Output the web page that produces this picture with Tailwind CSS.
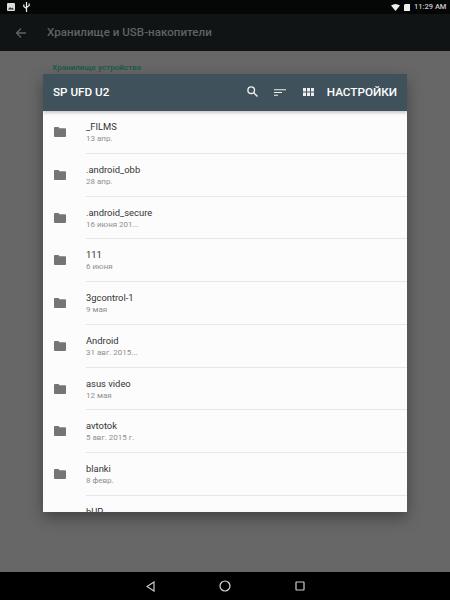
<!DOCTYPE html>
<html lang="en">
<head>
  <meta charset="UTF-8" />
  <title>SP UFD U2</title>
  <script src="https://cdn.jsdelivr.net/npm/@tailwindcss/browser@4"></script>
</head>
<body class="bg-[#676767]">
  <div class="relative flex flex-col w-[450px] h-[600px] overflow-hidden font-['Roboto',sans-serif]">
    <!-- status bar -->
    <div class="flex items-center h-[14px] pl-[7px] pr-[5px] bg-[#050606]">
      <svg class="w-[8px] h-[8px]" viewBox="0 0 8 8"><rect width="8" height="8" rx="1" fill="#ddd"/><path d="M1 6.500l2-2.500 1.500 1.500 1-1 1.500 2z" fill="#333"/></svg>
      <svg class="w-[7px] h-[10px] ml-[8px]" viewBox="0 0 7 10" fill="none" stroke="#eee" stroke-width="1.200"><path d="M3.500 0v10M.8 2.500v2l2.700 2M6.200 1.500v2l-2.700 2"/></svg>
      <svg class="w-[9px] h-[7px] ml-auto" viewBox="0 0 9 7"><path d="M0 1.500q4.500-3 9 0L4.500 7z" fill="#eee"/></svg>
      <svg class="w-[6px] h-[7px] ml-[4px]" viewBox="0 0 6 7"><path d="M0 1L1 0h5v7H0z" fill="#eee"/></svg>
      <span class="ml-[4px] w-[31px] whitespace-nowrap text-[7.500px] font-medium leading-none text-[#c8c8c8]">11:29 AM</span>
    </div>
    <!-- dimmed settings toolbar -->
    <div class="flex items-center h-[37px] bg-[#101415]">
      <svg class="w-[12px] h-[12px] ml-[15px]" viewBox="0 0 12 12" fill="none" stroke="#5f6364" stroke-width="1.300"><path d="M11 6H1.500M6 1.500L1.500 6 6 10.500"/></svg>
      <span class="ml-[20px] text-[11.600px] font-medium text-[#5f6364]">Хранилище и USB-накопители</span>
    </div>
    <div class="flex-1 pl-[52px] pt-[12px] text-[8.100px] font-semibold leading-none text-[#1f5a46]">Хранилище устройства</div>
    <!-- nav bar -->
    <div class="flex items-center justify-between h-[28px] pl-[146px] pr-[145px] bg-black">
      <svg class="w-[9px] h-[11px]" viewBox="0 0 9 11" fill="none" stroke="#ccc" stroke-width="1.200"><path d="M8 1L1 5.500 8 10z"/></svg>
      <svg class="w-[12px] h-[12px]" viewBox="0 0 12 12" fill="none" stroke="#ddd" stroke-width="1.200"><circle cx="6" cy="6" r="5"/></svg>
      <svg class="w-[10px] h-[10px]" viewBox="0 0 10 10" fill="none" stroke="#ccc" stroke-width="1.200"><rect x="1" y="1" width="8" height="8" rx=".5"/></svg>
    </div>
    <!-- dialog -->
    <div class="absolute left-[43px] top-[74px] flex flex-col w-[364px] h-[438px] overflow-hidden bg-[#fcfcfc] shadow-[0_6px_14px_rgba(0,0,0,0.35)]">
      <div class="flex shrink-0 items-center h-[37px] px-[10px] bg-[#3f525c] text-white shadow-[0_2px_3px_rgba(0,0,0,0.2)] z-10">
        <span class="text-[11.700px] font-medium">SP UFD U2</span>
        <svg class="w-[11px] h-[11px] ml-auto mb-[2px]" viewBox="0 0 11 11" fill="none" stroke="#eee" stroke-width="1.400"><circle cx="4.200" cy="4.200" r="3.300"/><path d="M6.700 6.700l3.800 3.800"/></svg>
        <svg class="w-[12px] h-[7px] ml-[16px] mb-[1px]" viewBox="0 0 12 7" fill="none" stroke="#eee" stroke-width="1.100"><path d="M0 .8h12M0 3.500h8M0 6.200h4"/></svg>
        <svg class="w-[11px] h-[8px] ml-[17px] mb-[2px]" viewBox="0 0 11 8" fill="#eee"><path d="M0 0h3v3.500H0zM4 0h3v3.500H4zM8 0h3v3.500H8zM0 4.500h3V8H0zM4 4.500h3V8H4zM8 4.500h3V8H8z"/></svg>
        <span class="ml-[13px] text-[11.700px] font-medium">НАСТРОЙКИ</span>
      </div>
      <ul class="flex-1 overflow-hidden">
        <li class="flex h-[42.750px]">
          <svg class="w-[12px] h-[10px] mt-[16px] ml-[11px]" viewBox="0 0 12 10" fill="#757575"><path d="M0 1a1 1 0 0 1 1-1h3.500l1 1.300H11a1 1 0 0 1 1 1V9a1 1 0 0 1-1 1H1a1 1 0 0 1-1-1z"/></svg>
          <div class="flex-1 ml-[20px] pt-[10px] border-b border-[#e6e6e6]">
            <div class="text-[9.400px] leading-[12px] text-[#333]">_FILMS</div>
            <div class="text-[8px] leading-[12px] text-[#8f8f8f]">13 апр.</div>
          </div>
        </li>
        <li class="flex h-[42.750px]">
          <svg class="w-[12px] h-[10px] mt-[16px] ml-[11px]" viewBox="0 0 12 10" fill="#757575"><path d="M0 1a1 1 0 0 1 1-1h3.500l1 1.300H11a1 1 0 0 1 1 1V9a1 1 0 0 1-1 1H1a1 1 0 0 1-1-1z"/></svg>
          <div class="flex-1 ml-[20px] pt-[10px] border-b border-[#e6e6e6]">
            <div class="text-[9.400px] leading-[12px] text-[#333]">.android_obb</div>
            <div class="text-[8px] leading-[12px] text-[#8f8f8f]">28 апр.</div>
          </div>
        </li>
        <li class="flex h-[42.750px]">
          <svg class="w-[12px] h-[10px] mt-[16px] ml-[11px]" viewBox="0 0 12 10" fill="#757575"><path d="M0 1a1 1 0 0 1 1-1h3.500l1 1.300H11a1 1 0 0 1 1 1V9a1 1 0 0 1-1 1H1a1 1 0 0 1-1-1z"/></svg>
          <div class="flex-1 ml-[20px] pt-[10px] border-b border-[#e6e6e6]">
            <div class="text-[9.400px] leading-[12px] text-[#333]">.android_secure</div>
            <div class="text-[8px] leading-[12px] text-[#8f8f8f]">16 июня 201...</div>
          </div>
        </li>
        <li class="flex h-[42.750px]">
          <svg class="w-[12px] h-[10px] mt-[16px] ml-[11px]" viewBox="0 0 12 10" fill="#757575"><path d="M0 1a1 1 0 0 1 1-1h3.500l1 1.300H11a1 1 0 0 1 1 1V9a1 1 0 0 1-1 1H1a1 1 0 0 1-1-1z"/></svg>
          <div class="flex-1 ml-[20px] pt-[10px] border-b border-[#e6e6e6]">
            <div class="text-[9.400px] leading-[12px] text-[#333]">111</div>
            <div class="text-[8px] leading-[12px] text-[#8f8f8f]">6 июня</div>
          </div>
        </li>
        <li class="flex h-[42.750px]">
          <svg class="w-[12px] h-[10px] mt-[16px] ml-[11px]" viewBox="0 0 12 10" fill="#757575"><path d="M0 1a1 1 0 0 1 1-1h3.500l1 1.300H11a1 1 0 0 1 1 1V9a1 1 0 0 1-1 1H1a1 1 0 0 1-1-1z"/></svg>
          <div class="flex-1 ml-[20px] pt-[10px] border-b border-[#e6e6e6]">
            <div class="text-[9.400px] leading-[12px] text-[#333]">3gcontrol-1</div>
            <div class="text-[8px] leading-[12px] text-[#8f8f8f]">9 мая</div>
          </div>
        </li>
        <li class="flex h-[42.750px]">
          <svg class="w-[12px] h-[10px] mt-[16px] ml-[11px]" viewBox="0 0 12 10" fill="#757575"><path d="M0 1a1 1 0 0 1 1-1h3.500l1 1.300H11a1 1 0 0 1 1 1V9a1 1 0 0 1-1 1H1a1 1 0 0 1-1-1z"/></svg>
          <div class="flex-1 ml-[20px] pt-[10px] border-b border-[#e6e6e6]">
            <div class="text-[9.400px] leading-[12px] text-[#333]">Android</div>
            <div class="text-[8px] leading-[12px] text-[#8f8f8f]">31 авг. 2015...</div>
          </div>
        </li>
        <li class="flex h-[42.750px]">
          <svg class="w-[12px] h-[10px] mt-[16px] ml-[11px]" viewBox="0 0 12 10" fill="#757575"><path d="M0 1a1 1 0 0 1 1-1h3.500l1 1.300H11a1 1 0 0 1 1 1V9a1 1 0 0 1-1 1H1a1 1 0 0 1-1-1z"/></svg>
          <div class="flex-1 ml-[20px] pt-[10px] border-b border-[#e6e6e6]">
            <div class="text-[9.400px] leading-[12px] text-[#333]">asus video</div>
            <div class="text-[8px] leading-[12px] text-[#8f8f8f]">12 мая</div>
          </div>
        </li>
        <li class="flex h-[42.750px]">
          <svg class="w-[12px] h-[10px] mt-[16px] ml-[11px]" viewBox="0 0 12 10" fill="#757575"><path d="M0 1a1 1 0 0 1 1-1h3.500l1 1.300H11a1 1 0 0 1 1 1V9a1 1 0 0 1-1 1H1a1 1 0 0 1-1-1z"/></svg>
          <div class="flex-1 ml-[20px] pt-[10px] border-b border-[#e6e6e6]">
            <div class="text-[9.400px] leading-[12px] text-[#333]">avtotok</div>
            <div class="text-[8px] leading-[12px] text-[#8f8f8f]">5 авг. 2015 г.</div>
          </div>
        </li>
        <li class="flex h-[42.750px]">
          <svg class="w-[12px] h-[10px] mt-[16px] ml-[11px]" viewBox="0 0 12 10" fill="#757575"><path d="M0 1a1 1 0 0 1 1-1h3.500l1 1.300H11a1 1 0 0 1 1 1V9a1 1 0 0 1-1 1H1a1 1 0 0 1-1-1z"/></svg>
          <div class="flex-1 ml-[20px] pt-[10px] border-b border-[#e6e6e6]">
            <div class="text-[9.400px] leading-[12px] text-[#333]">blanki</div>
            <div class="text-[8px] leading-[12px] text-[#8f8f8f]">8 февр.</div>
          </div>
        </li>
        <li class="flex h-[42.750px]">
          <div class="flex-1 ml-[43px] pt-[10px]">
            <div class="text-[9.400px] leading-[12px] text-[#333]">bUP</div>
          </div>
        </li>
      </ul>
    </div>
  </div>
</body>
</html>
